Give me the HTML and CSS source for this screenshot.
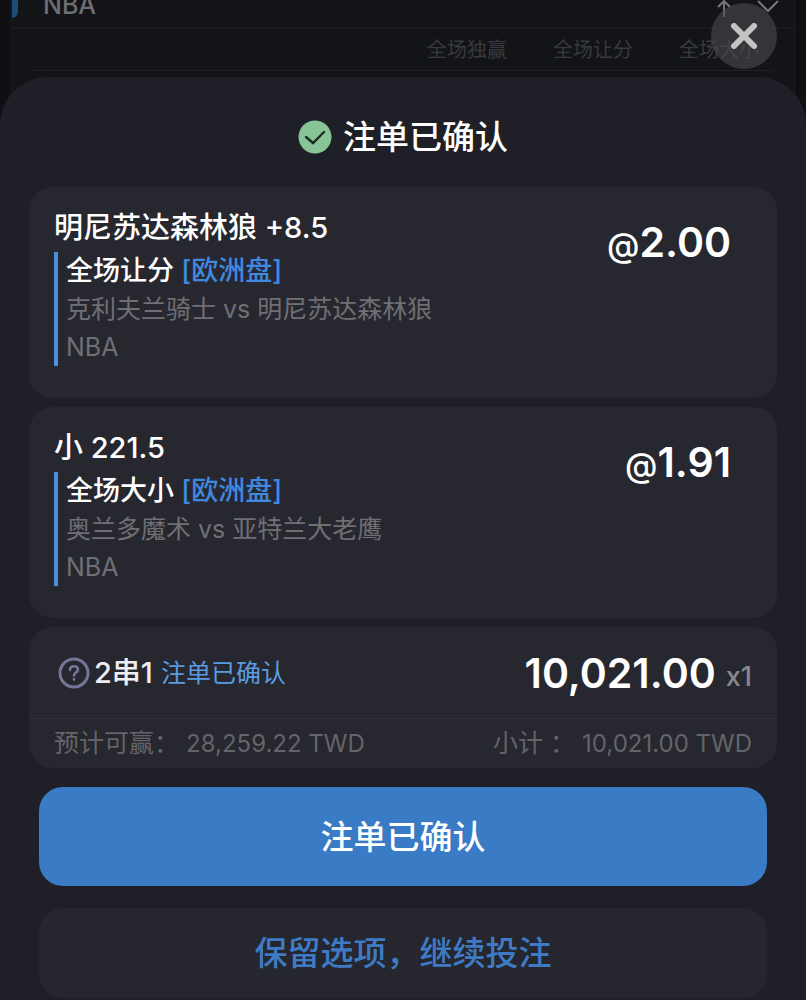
FILE: index.html
```html
<!DOCTYPE html>
<html lang="zh-CN">

<head>
    <meta charset="UTF-8">
    <meta name="viewport" content="width=device-width, initial-scale=1.0">
    <title>注单已确认</title>
    <link rel="stylesheet" href="styles.css">
</head>

<body>
    <!-- LEAGUE LIST (behind the slip) -->
    <section class="league">
        <div class="league-head">
            <span class="league-name">NBA</span>
            <div class="league-icons">
                <svg width="16" height="24" viewBox="0 0 16 24">
                    <path d="M8 24V8M2 14l6-6 6 6" />
                </svg>
                <svg width="24" height="24" viewBox="0 0 24 24">
                    <path d="M2 8l10 10L22 8" />
                </svg>
            </div>
        </div>
        <div class="league-cols">
            <span>全场独赢</span>
            <span>全场让分</span>
            <span>全场大小</span>
        </div>
    </section>

    <button type="button" class="close" aria-label="关闭">
        <svg width="26" height="26" viewBox="0 0 26 26">
            <path d="M3 3l20 20M23 3L3 23" />
        </svg>
    </button>

    <!-- BET SLIP -->
    <main class="sheet">
        <h1 class="sheet-title">
            <svg width="34" height="34" viewBox="0 0 34 34">
                <circle cx="17" cy="17" r="16.500" fill="#88c596" />
                <path d="M8 17l7 6 11-11" fill="none" stroke="#1f2a25" stroke-width="2.4" stroke-linecap="round" />
            </svg>
            注单已确认
        </h1>

        <article class="card bet">
            <div>
                <h2 class="bet-pick">明尼苏达森林狼 +8.5</h2>
                <div class="bet-info">
                    <p class="market">全场让分 <span class="odds-type">[欧洲盘]</span></p>
                    <p>克利夫兰骑士 vs 明尼苏达森林狼</p>
                    <p>NBA</p>
                </div>
            </div>
            <p class="odds"><span class="at">@</span>2.00</p>
        </article>

        <article class="card bet">
            <div>
                <h2 class="bet-pick">小 221.5</h2>
                <div class="bet-info">
                    <p class="market">全场大小 <span class="odds-type">[欧洲盘]</span></p>
                    <p>奥兰多魔术 vs 亚特兰大老鹰</p>
                    <p>NBA</p>
                </div>
            </div>
            <p class="odds"><span class="at">@</span>1.91</p>
        </article>

        <section class="card">
            <div class="parlay">
                <button type="button" class="help" aria-label="说明">
                    <svg width="32" height="32" viewBox="0 0 32 32">
                        <circle cx="16" cy="16" r="14" stroke-width="3" />
                        <path d="M12 13c0-5 8-5 8-.5 0 3-4 2.800-4 6M16 22v.6" stroke-width="2.6" />
                    </svg>
                </button>
                <span class="parlay-name">2串1</span>
                <span class="status">注单已确认</span>
                <span class="stake">10,021.00</span>
                <span class="times">x1</span>
            </div>
            <div class="totals">
                <span>预计可赢： <span class="amount">28,259.22 TWD</span></span>
                <span>小计 ： <span class="amount">10,021.00 TWD</span></span>
            </div>
        </section>

        <div class="actions">
            <button type="button" class="btn btn-primary">注单已确认</button>
            <button type="button" class="btn btn-keep">保留选项，继续投注</button>
        </div>
    </main>
</body>

</html>
```
FILE: styles.css
```css
* {
    margin: 0;
    padding: 0;
    box-sizing: border-box;
}

body {
    background-color: #0f1014;
    color: #fff;
    font-family: Inter, 'Noto Sans CJK SC', sans-serif;
    overflow: hidden;
}

button {
    border: none;
    font-family: inherit;
    cursor: pointer;
}

svg {
    display: block;
    flex: none;
}

/* league list */
.league {
    height: 170px;
    margin: -20px 11px 0;
    background-color: #131417;
    border: 1px solid #1a1b1f;
}

.league-head {
    height: 48px;
    display: flex;
    align-items: center;
    justify-content: space-between;
    padding: 2px 14px 0 31px;
    border-bottom: 2px solid #1a1b1f;
    position: relative;
}

.league-head::before {
    content: '';
    position: absolute;
    left: 0;
    top: 0;
    width: 6px;
    height: 37px;
    background-color: #1c4c75;
    border-radius: 0 0 6px 0;
}

.league-name {
    color: #6d6e71;
    font-size: 25px;
    font-weight: 500;
}

.league-icons {
    display: flex;
    gap: 24px;
}

.league-icons path {
    fill: none;
    stroke: #77787b;
    stroke-width: 2;
}

.league-cols {
    display: flex;
    justify-content: flex-end;
    gap: 46px;
    height: 42px;
    margin: 0 21px;
    padding-right: 14px;
    border-bottom: 1px solid #1f2023;
    color: #393a3d;
    font-size: 20px;
    line-height: 42px;
}

.close {
    position: absolute;
    top: 3px;
    right: 29px;
    width: 66px;
    height: 66px;
    display: flex;
    align-items: center;
    justify-content: center;
    border-radius: 50%;
    background-color: rgba(75, 75, 79, 0.6);
}

.close path {
    stroke: #c3c3c4;
    stroke-width: 6;
    stroke-linecap: round;
}

/* bet slip */
.sheet {
    position: relative;
    min-height: 923px;
    margin-top: -73px;
    padding: 40px 29px 4px;
    display: flex;
    flex-direction: column;
    gap: 9px;
    border-radius: 48px 48px 0 0;
    background-color: #1f1f27;
}

.sheet-title {
    display: flex;
    align-items: center;
    justify-content: center;
    gap: 11px;
    margin-bottom: 21px;
    font-size: 33px;
    font-weight: 500;
    line-height: 40px;
}

.card {
    border-radius: 24px;
    background-color: #27272f;
}

.bet {
    display: flex;
    justify-content: space-between;
    padding: 21px 46px 32px 25px;
}

.bet-pick {
    margin-bottom: 4px;
    font-size: 29px;
    font-weight: 500;
    line-height: 40px;
}

.bet-info {
    padding-left: 8px;
    border-left: 4px solid #4a8fe0;
    color: #6f6f74;
    font-size: 25px;
    line-height: 38px;
}

.market {
    color: #fff;
    font-size: 27px;
    font-weight: 500;
}

.odds-type {
    color: #4088e0;
}

.odds {
    margin-top: 13px;
    font-size: 41px;
    font-weight: 600;
    line-height: 42px;
}

.at {
    font-size: 33px;
    font-weight: 500;
}

.parlay {
    display: flex;
    align-items: center;
    height: 92px;
    padding: 0 25px 0 29px;
    border-bottom: 1px solid #303038;
    line-height: 40px;
}

.help {
    margin-right: 4px;
    background: none;
}

.help svg {
    fill: none;
    stroke: #777499;
    stroke-linecap: round;
}

.parlay-name {
    color: #eeeef2;
    font-size: 29px;
    font-weight: 500;
}

.status {
    margin-left: 8px;
    color: #5a9be0;
    font-size: 25px;
}

.stake {
    margin-left: auto;
    font-size: 41px;
    font-weight: 600;
}

.times {
    margin: 8px 0 0 10px;
    color: #88888c;
    font-size: 27px;
    font-weight: 500;
}

.totals {
    display: flex;
    justify-content: space-between;
    padding: 0 25px;
    color: #646469;
    font-size: 25px;
    line-height: 48px;
}

.amount {
    font-size: 24px;
}

.actions {
    display: flex;
    flex-direction: column;
    gap: 22px;
    padding: 10px 10px 0;
}

.btn {
    border-radius: 24px;
    font-size: 33px;
    font-weight: 500;
    line-height: 40px;
}

.btn-primary {
    padding: 30px 0 29px;
    background-color: #397bc5;
    color: #fff;
}

.btn-keep {
    padding: 25px 0;
    background-color: #26262e;
    color: #3f7bc5;
}
```
